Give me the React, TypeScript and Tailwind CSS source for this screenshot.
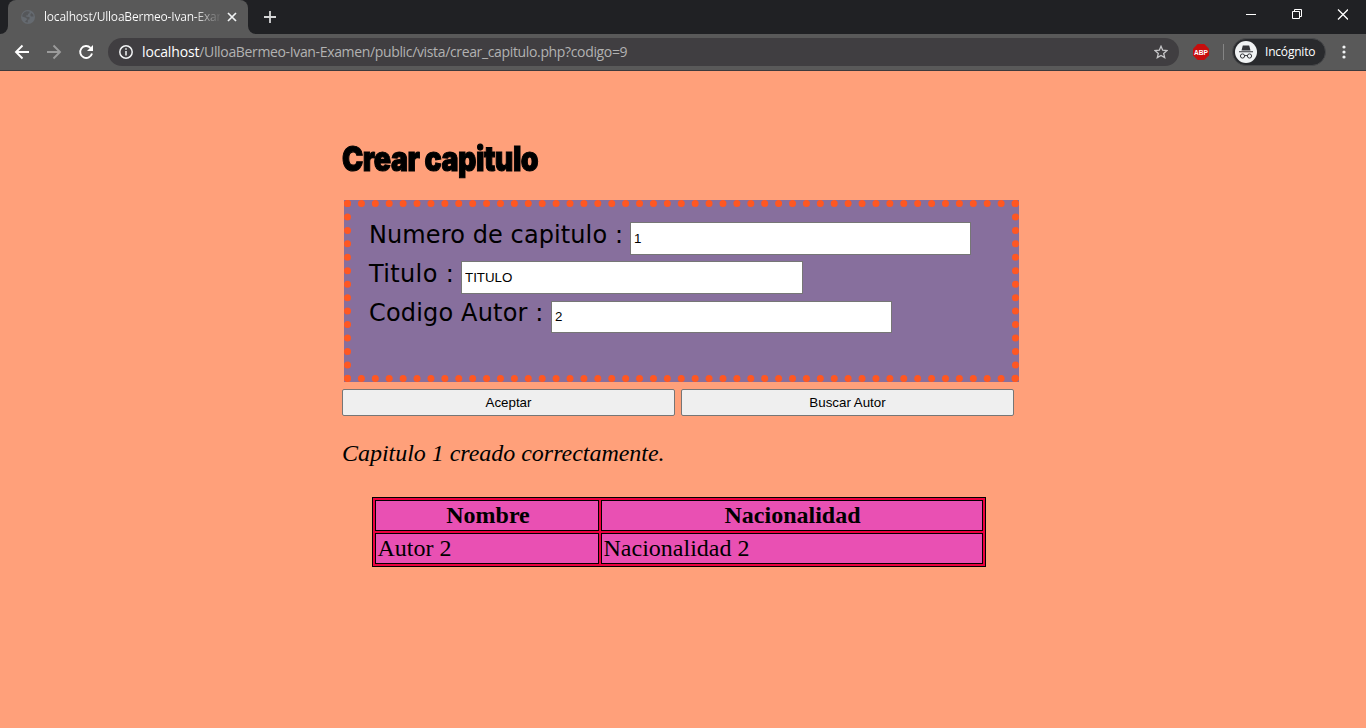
import React from "react";

const ui = "font-['Open_Sans','Noto_Sans',sans-serif]";

function Globe() {
  return (
    <svg width="14" height="14" viewBox="0 0 14 14">
      <circle cx="7" cy="7" r="7" fill="#656a70" />
      <path d="M1.200 6.500c0-2.500 1.800-4.700 4.300-5.300l3 .2v1.500L7 4v1.300H5.300v1.500l3.200.2v2.200l-1.700.6v2.700A6 6 0 0 1 4 11.500l2.300-2.300-1.500-1.500zM10.300 3l1.800 1.400.5 2-2.600 0-.8-1.500z" fill="#55575a" />
    </svg>
  );
}

function TabStrip() {
  return (
    <div className="flex h-[34px] bg-[#202124]">
      <div className="flex w-2 items-end bg-[#595959]">
        <div className="h-[34px] w-2 rounded-br-lg bg-[#202124]" />
      </div>
      <div className="flex w-[240px] items-center rounded-t-lg bg-[#595959] pl-[13px]">
        <Globe />
        <div className={`ml-[9px] h-5 w-[176px] overflow-hidden whitespace-nowrap bg-gradient-to-r from-white from-85% to-[#666] bg-clip-text text-[12px] leading-[20px] tracking-[-0.2px] text-transparent ${ui}`}>
          localhost/UlloaBermeo-Ivan-Exam
        </div>
        <svg className="ml-[7px]" width="10" height="10" viewBox="0 0 10 10" stroke="#f1f3f4" strokeWidth="1.7">
          <path d="m1 1 8 8M9 1 1 9" />
        </svg>
      </div>
      <div className="w-2 bg-[#595959]">
        <div className="h-[34px] w-2 rounded-bl-lg bg-[#202124]" />
      </div>
      <svg className="ml-2 mt-[11px]" width="12" height="12" viewBox="0 0 12 12" stroke="#d5d6d7" strokeWidth="1.8">
        <path d="M6 0v12M0 6h12" />
      </svg>
      <div className="ml-auto flex pt-[9px] pr-[18px]">
        <svg width="102" height="11" viewBox="0 0 102 11" fill="none" stroke="#fff">
          <path d="M0 5.500h10M46.500 2.500h7v7h-7zM48.500 2.500v-2h7v7h-2" />
          <path d="m92 .5 10 10M102 .5l-10 10" strokeWidth="1.300" />
        </svg>
      </div>
    </div>
  );
}

function Toolbar() {
  return (
    <div className="flex h-[37px] items-start border-b border-[#3c3a3d] bg-[#595959] pt-1">
      <svg className="shrink-0" width="108" height="28" viewBox="0 0 108 28" fill="none" strokeWidth="1.900">
        <path d="M29 14H16m6.500-6.500L16 14l6.500 6.500" stroke="#fff" />
        <path d="M47 14h13m-6.500-6.500L60 14l-6.500 6.500" stroke="#9b9b9b" />
        <path d="M90.500 9.800A6 6 0 1 0 92 15.500" stroke="#fff" />
        <path d="M93 7v6h-6z" fill="#fff" />
      </svg>
      <div className="flex h-7 w-[1071px] items-center rounded-full bg-[#403e41] pl-[11px] pr-[11px]">
        <svg width="14" height="14" viewBox="0 0 14 14" fill="none" stroke="#f1f3f4" strokeWidth="1.500">
          <circle cx="7" cy="7" r="6.200" />
          <path d="M7 6v4.500M7 3.200v1.600" />
        </svg>
        <div className={`ml-[9px] whitespace-nowrap text-[14px] leading-[20px] tracking-[-0.35px] text-[#b2b2b2] ${ui}`}>
          <span className="tracking-[-0.15px] text-white">localhost</span>/UlloaBermeo-Ivan-Examen/public/vista/crear_capitulo.php?codigo=9
        </div>
        <svg className="ml-auto" width="14" height="14" viewBox="0 0 14 14" fill="none" stroke="#c6c6c8" strokeWidth="1.300">
          <path d="m7 1.300 1.700 3.900 4.200.4-3.200 2.800 1 4.200L7 10.400l-3.700 2.200 1-4.200-3.200-2.800 4.200-.4z" />
        </svg>
      </div>
      <svg className="ml-[14px] mt-[6px] shrink-0" width="16" height="16" viewBox="0 0 16 16">
        <path d="M4.700 0h6.600L16 4.700v6.600L11.300 16H4.700L0 11.300V4.700z" fill="#c70d0c" />
        <text x="8" y="11" textAnchor="middle" fontFamily="Liberation Sans" fontWeight="bold" fontSize="8" textLength="14" lengthAdjust="spacingAndGlyphs" fill="#fff">ABP</text>
      </svg>
      <div className="ml-[14px] mt-[6px] h-4 w-px bg-[#858585]" />
      <div className="ml-[8px] flex h-[28px] w-[94px] items-center rounded-full border border-[#48494b] bg-[#292a2d] pl-[2px]">
        <svg width="22" height="22" viewBox="0 0 22 22" className="shrink-0">
          <circle cx="11" cy="11" r="11" fill="#f1f3f4" />
          <path d="M7.800 4.500h6.400l1.300 5h-9zM4 10.200h14v1.100H4z" fill="#35363a" />
          <g fill="none" stroke="#35363a">
            <circle cx="7.500" cy="15" r="2.100" />
            <circle cx="14.500" cy="15" r="2.100" />
            <path d="M9.700 14.800q1.300-.7 2.600 0" />
          </g>
        </svg>
        <span className={`ml-[8px] text-[12px] leading-[20px] tracking-[-0.2px] text-white ${ui}`}>Incógnito</span>
      </div>
      <svg className="ml-[16px] mt-[7px]" width="4" height="14" viewBox="0 0 4 14" fill="#f1f3f4">
        <circle cx="2" cy="2" r="1.600" />
        <circle cx="2" cy="7" r="1.600" />
        <circle cx="2" cy="12" r="1.600" />
      </svg>
    </div>
  );
}

const label = "shrink-0 whitespace-pre font-['DejaVu_Sans',sans-serif] text-[24px] leading-[30px] text-black";
const field = "rounded-none border border-[#767676] bg-white pl-[3px] font-['Liberation_Sans',sans-serif] text-[13.33px] text-black outline-none";
const button = "h-[27px] w-[333px] rounded-[2px] border border-[#767676] bg-[#efefef] font-['Liberation_Sans',sans-serif] text-[13.33px] text-black";
const cell = "border border-black bg-[#e950b3] text-[24px] leading-[29px]";

export default function App() {
  return (
    <div className="h-[728px] w-[1366px] overflow-hidden bg-[#ffa07a]">
      <TabStrip />
      <Toolbar />
      <main className="ml-[342px] w-[680px] pt-[64px]">
        <h1 className="h-[47px] w-[300px] origin-left scale-x-[0.84] whitespace-nowrap font-['Inter','Roboto',sans-serif] text-[34px] font-black leading-[47px] tracking-[-0.6px] text-black [-webkit-text-stroke:1.1px_black]">
          Crear capitulo
        </h1>
        <form className="ml-[2px] mt-[18px] h-[182px] w-[675px] border-[7px] border-dotted border-[#ff5722] bg-[#876f9d] pl-[18px] pt-[15px]">
          <div className="flex h-[39px]">
            <label className={`${label} mt-[-2px] w-[261px] tracking-[0.1px]`}>Numero de capitulo :</label>
            <input className={`${field} h-[33px] w-[341px]`} defaultValue="1" />
          </div>
          <div className="flex h-[40px]">
            <label className={`${label} mt-[-2px] w-[92px] tracking-[0.35px]`}>Titulo :</label>
            <input className={`${field} h-[33px] w-[342px]`} defaultValue="TITULO" />
          </div>
          <div className="flex">
            <label className={`${label} mt-[-3px] w-[182px] tracking-[0.17px]`}>Codigo Autor :</label>
            <input className={`${field} h-[32px] w-[341px] pb-[2px] pl-[2px]`} defaultValue="2" />
          </div>
        </form>
        <div className="mt-[7px] flex gap-[6px]">
          <button className={button}>Aceptar</button>
          <button className={button}>Buscar Autor</button>
        </div>
        <div className="font-['Liberation_Serif',serif] text-black">
          <p className="mt-[24px] text-[24px] italic leading-[27px] tracking-[-0.03px]">Capitulo 1 creado correctamente.</p>
          <div className="ml-[30px] mt-[30px] grid w-[614px] grid-cols-[224px_382px] grid-rows-[31px_31px] gap-[2px] border border-black bg-[#ec003f] p-[2px]">
            <div className={`${cell} pl-[2px] text-center font-bold`}>Nombre</div>
            <div className={`${cell} pl-px text-center font-bold`}>Nacionalidad</div>
            <div className={`${cell} pl-[1.500px]`}>Autor 2</div>
            <div className={`${cell} pl-[1.500px]`}>Nacionalidad 2</div>
          </div>
        </div>
      </main>
    </div>
  );
}
